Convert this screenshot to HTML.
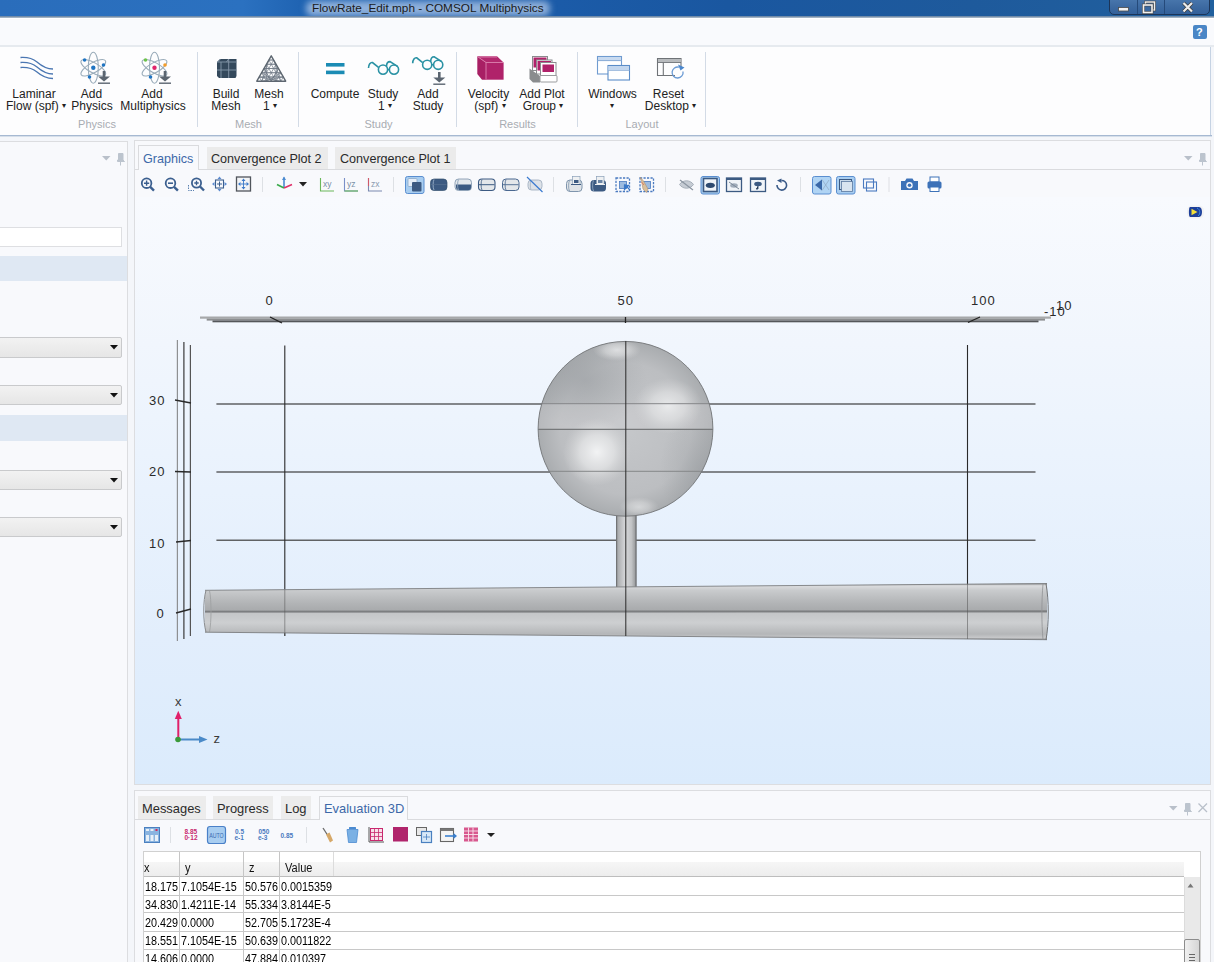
<!DOCTYPE html>
<html><head><meta charset="utf-8">
<style>
*{box-sizing:border-box}
html,body{margin:0;padding:0}
body{width:1214px;height:962px;position:relative;overflow:hidden;background:#f4f6fa;font-family:"Liberation Sans",sans-serif;color:#1e1e1e}
.a{position:absolute}
.t{position:absolute;white-space:nowrap;line-height:1}
.rb{font-size:12px;color:#222;text-align:center;width:100px}
.gl{font-size:11px;color:#a8acb2;text-align:center;width:80px}
svg{position:absolute;overflow:visible}
</style></head><body>

<!-- TITLE BAR -->
<div class="a" style="left:0;top:0;width:1214px;height:17px;background:linear-gradient(90deg,#2a6dbb 0%,#2b71c0 20%,#1f63b2 25%,#1b5ba8 46%,#1a57a0 60%,#1e5a9c 80%,#21609e 100%)"></div>
<div class="a" style="left:306px;top:1px;width:244px;height:15px;background:rgba(190,210,238,0.7);border-radius:6px;filter:blur(3px)"></div>
<div class="t" style="left:312px;top:3px;font-size:11.8px;color:#1a1a1a">FlowRate_Edit.mph - COMSOL Multiphysics</div>
<div class="a" style="left:0;top:15.5px;width:1214px;height:2px;background:linear-gradient(#5c7a9c,#b8c4d0)"></div>
<!-- window buttons -->
<div class="a" style="left:1109px;top:-3px;width:101px;height:18px;border:1px solid #1c3558;border-radius:0 0 5px 5px;background:linear-gradient(#4a78ae,#3c69a0 60%,#33609a)"></div>
<div class="a" style="left:1137px;top:0;width:1px;height:14px;background:#254a7a"></div>
<div class="a" style="left:1164px;top:0;width:1px;height:14px;background:#254a7a"></div>
<svg style="left:0;top:0" width="1214" height="20">
 <rect x="1118.5" y="7.5" width="10" height="3.5" fill="#f2f2f2" stroke="#4a4a4a" stroke-width="0.8"/>
 <rect x="1145.5" y="2" width="9" height="8" fill="none" stroke="#4a4a4a" stroke-width="2.6"/>
 <rect x="1145.5" y="2" width="9" height="8" fill="none" stroke="#eeeeee" stroke-width="1.4"/>
 <rect x="1143.5" y="5" width="8.5" height="7.5" fill="#3a68a0" stroke="#4a4a4a" stroke-width="2.8"/>
 <rect x="1143.5" y="5" width="8.5" height="7.5" fill="none" stroke="#f0f0f0" stroke-width="1.6"/>
 <rect x="1146" y="7.5" width="3.5" height="2.5" fill="#3a68a0"/>
 <path d="M1183.5 3 L1192 11.5 M1192 3 L1183.5 11.5" stroke="#3a3a3a" stroke-width="3.6"/>
 <path d="M1183.5 3 L1192 11.5 M1192 3 L1183.5 11.5" stroke="#ececec" stroke-width="2.2"/>
</svg>

<!-- QAT band -->
<div class="a" style="left:0;top:17.5px;width:1214px;height:29px;background:#f9fafd;border-top:1.5px solid #fff;border-bottom:2px solid #e6eaef"></div>
<div class="a" style="left:1193px;top:25px;width:14px;height:14px;background:#4a86c6;border-radius:2px"></div>
<div class="t" style="left:1196px;top:27px;font-size:11px;font-weight:bold;color:#fff">?</div>

<!-- RIBBON -->
<div class="a" style="left:0;top:46.5px;width:1211px;height:88.5px;background:#fdfdfe;border-right:1.5px solid #c6d3e3"></div>
<div class="a" style="left:0;top:135px;width:1212px;height:1px;background:#a6b9d2"></div><div class="a" style="left:0;top:136px;width:1212px;height:1px;background:#d6dfea"></div>


<!-- ribbon separators -->
<div class="a" style="left:197px;top:52px;width:1px;height:75px;background:#d3dbe6"></div>
<div class="a" style="left:298px;top:52px;width:1px;height:75px;background:#d3dbe6"></div>
<div class="a" style="left:456px;top:52px;width:1px;height:75px;background:#d3dbe6"></div>
<div class="a" style="left:577px;top:52px;width:1px;height:75px;background:#d3dbe6"></div>
<div class="a" style="left:705px;top:52px;width:1px;height:75px;background:#d3dbe6"></div>

<!-- ribbon labels line1 / line2 -->
<div class="t rb" style="left:-16px;top:87.5px">Laminar</div>
<div class="t rb" style="left:-14px;top:99.7px">Flow (spf) <span style="font-size:8px;position:relative;top:-2px">&#9662;</span></div>
<div class="t rb" style="left:41.5px;top:87.5px">Add</div>
<div class="t rb" style="left:42px;top:99.7px">Physics</div>
<div class="t rb" style="left:102px;top:87.5px">Add</div>
<div class="t rb" style="left:103px;top:99.7px">Multiphysics</div>
<div class="t rb" style="left:176px;top:87.5px">Build</div>
<div class="t rb" style="left:176px;top:99.7px">Mesh</div>
<div class="t rb" style="left:219px;top:87.5px">Mesh</div>
<div class="t rb" style="left:220px;top:99.7px">1 <span style="font-size:8px;position:relative;top:-2px">&#9662;</span></div>
<div class="t rb" style="left:285px;top:87.5px">Compute</div>
<div class="t rb" style="left:333px;top:87.5px">Study</div>
<div class="t rb" style="left:335px;top:99.7px">1 <span style="font-size:8px;position:relative;top:-2px">&#9662;</span></div>
<div class="t rb" style="left:378px;top:87.5px">Add</div>
<div class="t rb" style="left:378px;top:99.7px">Study</div>
<div class="t rb" style="left:438.5px;top:87.5px">Velocity</div>
<div class="t rb" style="left:440px;top:99.7px">(spf) <span style="font-size:8px;position:relative;top:-2px">&#9662;</span></div>
<div class="t rb" style="left:492px;top:87.5px">Add Plot</div>
<div class="t rb" style="left:493px;top:99.7px">Group <span style="font-size:8px;position:relative;top:-2px">&#9662;</span></div>
<div class="t rb" style="left:562.5px;top:87.5px">Windows</div>
<div class="t rb" style="left:562px;top:99.7px"><span style="font-size:8px;position:relative;top:-2px">&#9662;</span></div>
<div class="t rb" style="left:618.5px;top:87.5px">Reset</div>
<div class="t rb" style="left:620.5px;top:99.7px">Desktop <span style="font-size:8px;position:relative;top:-2px">&#9662;</span></div>

<div class="t gl" style="left:57px;top:119px">Physics</div>
<div class="t gl" style="left:208.5px;top:119px">Mesh</div>
<div class="t gl" style="left:338.5px;top:119px">Study</div>
<div class="t gl" style="left:477.5px;top:119px">Results</div>
<div class="t gl" style="left:602px;top:119px">Layout</div>

<!-- ribbon icons -->
<svg style="left:0;top:0" width="1" height="1">
<defs>
<g id="atom">
 <ellipse cx="0" cy="0" rx="15.5" ry="5" fill="none" stroke="#9aacba" stroke-width="1.1" transform="rotate(90)"/>
 <ellipse cx="0" cy="0" rx="14" ry="5" fill="none" stroke="#9aacba" stroke-width="1.1" transform="rotate(30)"/>
 <ellipse cx="0" cy="0" rx="14" ry="5" fill="none" stroke="#9aacba" stroke-width="1.1" transform="rotate(-30)"/>
</g>
<g id="dl">
 <rect x="-1.3" y="-6" width="2.6" height="6" fill="#5b6570"/>
 <path d="M-6 -0.5 L6 -0.5 L0 4.5Z" fill="#5b6570"/>
 <rect x="-6" y="5.5" width="12" height="1.4" fill="#5b6570"/>
</g>
<g id="glasses">
 <path d="M-14.5 -1.5 C-14.5 -5 -12.5 -7.5 -10.5 -7 L-4.5 -2.2" fill="none" stroke="#2a92a4" stroke-width="1.6"/>
 <circle cx="0" cy="0" r="4.6" fill="none" stroke="#2a92a4" stroke-width="1.6"/>
 <circle cx="11" cy="0" r="4.6" fill="none" stroke="#2a92a4" stroke-width="1.6"/>
 <path d="M4.5 0 L6.5 0 M3.5 -3 C3.5 -6.5 5 -8 7 -8 L14.5 -3.2" fill="none" stroke="#2a92a4" stroke-width="1.6"/>
</g>
</defs>
</svg>
<!-- laminar -->
<svg style="left:20px;top:56px" width="34" height="24">
 <g fill="none" stroke="#4a76b2" stroke-width="1.3">
 <path d="M0.5 1.5 C8 1 14 3.5 17 6 C21 9.5 27 13 33 13"/>
 <path d="M0.5 6.5 C8 6 14 8.5 17 11 C21 14.5 27 18 33 18"/>
 <path d="M0.5 11.5 C8 11 14 13.5 17 16 C21 19.5 27 22.5 33 22.5"/>
 </g>
</svg>
<!-- add physics -->
<svg style="left:0;top:0" width="1" height="1">
 <use href="#atom" x="93.3" y="67.7"/>
 <circle cx="93.3" cy="67.7" r="3.4" fill="#fdfdfe"/><circle cx="93.3" cy="67.7" r="2.2" fill="#1f74c2"/>
 <circle cx="84.6" cy="60" r="1.8" fill="#1f74c2"/>
 <circle cx="103.5" cy="65" r="1.8" fill="#1f74c2"/>
 <circle cx="89.5" cy="77" r="1.8" fill="#1f74c2"/>
 <use href="#dl" x="104" y="77"/>
</svg>
<!-- add multiphysics -->
<svg style="left:0;top:0" width="1" height="1">
 <use href="#atom" x="154.5" y="67.7"/>
 <circle cx="154.5" cy="67.7" r="3.4" fill="#fdfdfe"/><circle cx="154.5" cy="67.7" r="2.2" fill="#e0246c"/>
 <circle cx="145.5" cy="60" r="1.8" fill="#6cc24a"/>
 <circle cx="165" cy="65" r="1.8" fill="#f39c2a"/>
 <circle cx="150.5" cy="77" r="1.8" fill="#1f74c2"/>
 <use href="#dl" x="165" y="77"/>
</svg>
<!-- build mesh cube -->
<svg style="left:216px;top:58px" width="22" height="22">
 <path d="M1 4 L4 1 L20.5 1 L20.5 18 L19.5 20 L3 20 L1 18Z" fill="#34495c"/>
 <path d="M1 4 L20.5 4 M5 4 L5 20 M12.7 1 L12.7 20 M1 12 L20.5 12 M4.5 1 L1.5 4 M12.7 1 L10.5 4" stroke="#8799aa" stroke-width="0.9" fill="none"/>
</svg>
<!-- mesh triangle -->
<svg style="left:256px;top:55px" width="31" height="27">
 <path d="M12.84 5.03 L17.66 5.03 M5.62 26.20 L17.66 5.03 M24.88 26.20 L12.84 5.03 M10.43 9.27 L20.07 9.27 M10.43 26.20 L20.07 9.27 M20.07 26.20 L10.43 9.27 M8.03 13.50 L22.48 13.50 M15.25 26.20 L22.48 13.50 M15.25 26.20 L8.03 13.50 M5.62 17.73 L24.88 17.73 M20.07 26.20 L24.88 17.73 M10.43 26.20 L5.62 17.73 M3.21 21.97 L27.29 21.97 M24.88 26.20 L27.29 21.97 M5.62 26.20 L3.21 21.97" stroke="#6f7985" stroke-width="0.7" fill="none"/>
 <path d="M12.84 5.03 L17.66 5.03 M5.62 26.20 L27.29 21.97 M24.88 26.20 L3.21 21.97 M10.43 9.27 L20.07 9.27 M10.43 26.20 L24.88 17.73 M20.07 26.20 L5.62 17.73 M8.03 13.50 L22.48 13.50 M15.25 26.20 L22.48 13.50 M15.25 26.20 L8.03 13.50 M5.62 17.73 L24.88 17.73 M20.07 26.20 L20.07 9.27 M10.43 26.20 L10.43 9.27 M3.21 21.97 L27.29 21.97 M24.88 26.20 L17.66 5.03 M5.62 26.20 L12.84 5.03" stroke="#6f7985" stroke-width="0.7" fill="none"/>
 <path d="M15.25 0.8 L29.7 26.2 L0.8 26.2Z" fill="none" stroke="#5d6670" stroke-width="1.4" stroke-linejoin="round"/>
</svg>
<!-- compute = -->
<svg style="left:326px;top:63px" width="19" height="12">
 <rect x="0" y="0" width="18.5" height="3.6" fill="#1b8bb4"/>
 <rect x="0" y="7.6" width="18.5" height="3.6" fill="#1b8bb4"/>
</svg>
<!-- study glasses -->
<svg style="left:0;top:0" width="1" height="1"><use href="#glasses" x="383" y="69.6"/></svg>
<svg style="left:0;top:0" width="1" height="1"><use href="#glasses" x="427.2" y="64.8"/></svg>
<svg style="left:0;top:0" width="1" height="1"><use href="#dl" x="439.3" y="78"/></svg>
<!-- velocity cube -->
<svg style="left:0;top:0" width="1" height="1">
 <path d="M477.3 56.3 L497 56.3 L503.6 62.5 L486 62.5Z" fill="#b3286e"/>
 <path d="M477.3 56.3 L486 62.5 L486 79.7 L482 79.7 L477.3 74Z" fill="#a81f64"/>
 <rect x="486" y="62.5" width="17.6" height="17.2" fill="#b0226a"/>
 <path d="M477.8 56.8 L486 62.5 L503.3 62.5 M486 62.5 L486 79.5 M479.5 57 L497 57" stroke="#d878a8" stroke-width="1" fill="none"/>
</svg>
<!-- add plot group -->
<svg style="left:0;top:0" width="1" height="1">
 <path d="M529.5 68.5 L540 76 L540 82.5 L533 82.5 L529.5 79Z" fill="#8a8c8e"/>
 <rect x="532.5" y="56.5" width="15" height="14" fill="#fff" stroke="#8a8c8e" stroke-width="1"/>
 <rect x="533.5" y="57.5" width="13" height="10" fill="#b0226a"/>
 <rect x="536.5" y="60" width="15.5" height="14" fill="#fff" stroke="#8a8c8e" stroke-width="1"/>
 <rect x="537.5" y="61" width="13.5" height="9.5" fill="#b0226a"/>
 <rect x="540.5" y="62.5" width="15.5" height="14.5" fill="#fff" stroke="#8a8c8e" stroke-width="1"/>
 <rect x="542.5" y="64.5" width="11.5" height="7.5" fill="#b0226a"/>
 <rect x="540" y="75.5" width="17" height="6.5" rx="1" fill="#fff" stroke="#9a9c9e" stroke-width="1"/>
</svg>
<!-- windows -->
<svg style="left:0;top:0" width="1" height="1">
 <rect x="597.5" y="56.5" width="24" height="17.5" fill="#fff" stroke="#6f9bd0" stroke-width="1.1"/>
 <path d="M597.5 60.5 L621.5 60.5" stroke="#8fb0d8" stroke-width="1.2"/>
 <rect x="598" y="57" width="23" height="3" fill="#c8daf0"/>
 <rect x="608" y="65.5" width="21.5" height="14.5" fill="#fff" stroke="#5a8cc8" stroke-width="1.1"/>
 <rect x="608.5" y="66" width="20.5" height="4" fill="#c2d6ee"/>
 <path d="M608 70.5 L629.5 70.5" stroke="#8fb0d8" stroke-width="0.8"/>
</svg>
<!-- reset desktop -->
<svg style="left:0;top:0" width="1" height="1">
 <path d="M675 75.5 L657.5 75.5 L657.5 58.5 L681 58.5 L681 67" fill="none" stroke="#6f7377" stroke-width="1.1"/>
 <rect x="658" y="59" width="22.5" height="3.5" fill="#b8bbbe"/>
 <path d="M657.5 62.5 L681 62.5" stroke="#6f7377" stroke-width="0.9"/>
 <path d="M663.3 62.5 L663.3 75.5" stroke="#6f7377" stroke-width="1.1"/>
 <path d="M683 71.5 A5.5 5.5 0 1 1 679 67.2" fill="none" stroke="#6a9ad4" stroke-width="1.3"/>
 <path d="M678 64.5 L684.5 67.5 L680.5 70.5Z" fill="#4a86cc"/>
</svg>

<!-- LEFT PANEL -->
<div class="a" style="left:-2px;top:141px;width:130px;height:830px;background:#f8f9fc;border:1px solid #dcdde0;border-left:none"></div>
<svg style="left:102px;top:156px" width="9" height="5"><path d="M0 0 L8.5 0 L4.25 4.5Z" fill="#b9c0ca"/></svg>
<svg style="left:117px;top:153px" width="8" height="13"><path d="M1.5 0.5 L6 0.5 L6 7 L7.5 8.5 L0.5 8.5 L0.5 7 L1.5 7Z M3.5 8.5 L3.5 12.5" fill="#bcc4ce" stroke="#bcc4ce" stroke-width="1"/></svg>
<div class="a" style="left:-2px;top:227px;width:124px;height:20px;background:#fff;border:1px solid #dedfe2"></div>
<div class="a" style="left:0;top:256px;width:127px;height:25px;background:#dfe8f3"></div>
<div class="a" style="left:-4px;top:337px;width:126px;height:21px;border:1px solid #c9cacc;border-radius:2px;background:linear-gradient(#f2f2f2,#e6e6e6)"></div>
<div class="a" style="left:-4px;top:385px;width:126px;height:20px;border:1px solid #c9cacc;border-radius:2px;background:linear-gradient(#f2f2f2,#e6e6e6)"></div>
<div class="a" style="left:0;top:415px;width:127px;height:26px;background:#dfe8f3"></div>
<div class="a" style="left:-4px;top:470px;width:126px;height:20px;border:1px solid #c9cacc;border-radius:2px;background:linear-gradient(#f2f2f2,#e6e6e6)"></div>
<div class="a" style="left:-4px;top:517px;width:126px;height:20px;border:1px solid #c9cacc;border-radius:2px;background:linear-gradient(#f2f2f2,#e6e6e6)"></div>
<svg style="left:110px;top:345px" width="9" height="5"><path d="M0 0 L8 0 L4 4.5Z" fill="#111"/></svg>
<svg style="left:110px;top:393px" width="9" height="5"><path d="M0 0 L8 0 L4 4.5Z" fill="#111"/></svg>
<svg style="left:110px;top:478px" width="9" height="5"><path d="M0 0 L8 0 L4 4.5Z" fill="#111"/></svg>
<svg style="left:110px;top:525px" width="9" height="5"><path d="M0 0 L8 0 L4 4.5Z" fill="#111"/></svg>

<!-- GRAPHICS PANEL -->
<div class="a" style="left:134px;top:140px;width:1077px;height:645px;background:#f8f9fc;border:1px solid #dcdde0"></div>
<div class="a" style="left:135px;top:197px;width:1075px;height:587px;background:linear-gradient(#f8fafe 0%,#f1f6fd 25%,#e9f2fd 50%,#e2eefc 75%,#dbebfc 100%)"></div>

<!-- PLOT -->
<svg style="left:0;top:0" width="1214" height="962" viewBox="0 0 1214 962">
<defs>
 <linearGradient id="pipeg" x1="0" y1="0" x2="0" y2="1">
  <stop offset="0" stop-color="#8a8c8e"/>
  <stop offset="0.04" stop-color="#dcdddf"/>
  <stop offset="0.12" stop-color="#c9cbcd"/>
  <stop offset="0.35" stop-color="#b2b4b6"/>
  <stop offset="0.47" stop-color="#a9abad"/>
  <stop offset="0.5" stop-color="#7c7e80"/>
  <stop offset="0.53" stop-color="#c4c6c8"/>
  <stop offset="0.7" stop-color="#cdcfd1"/>
  <stop offset="0.9" stop-color="#b4b6b8"/>
  <stop offset="0.97" stop-color="#c8c9cb"/>
  <stop offset="1" stop-color="#7a7c7e"/>
 </linearGradient>
 <linearGradient id="stemg" x1="0" y1="0" x2="1" y2="0">
  <stop offset="0" stop-color="#7d7f81"/>
  <stop offset="0.12" stop-color="#aeb0b2"/>
  <stop offset="0.45" stop-color="#d6d7d9"/>
  <stop offset="0.75" stop-color="#c2c4c6"/>
  <stop offset="0.9" stop-color="#a3a5a7"/>
  <stop offset="1" stop-color="#76787a"/>
 </linearGradient>
 <radialGradient id="sph" cx="0.5" cy="0.5" r="0.5">
  <stop offset="0" stop-color="#c5c7ca"/>
  <stop offset="0.75" stop-color="#bcbec1"/>
  <stop offset="1" stop-color="#a9acaf"/>
 </radialGradient>
 <radialGradient id="hl" cx="0.5" cy="0.5" r="0.5">
  <stop offset="0" stop-color="#f2f3f4" stop-opacity="1"/>
  <stop offset="0.5" stop-color="#e8e9ea" stop-opacity="0.7"/>
  <stop offset="1" stop-color="#d8d9da" stop-opacity="0"/>
 </radialGradient>
 <radialGradient id="dk" cx="0.5" cy="0.5" r="0.5">
  <stop offset="0" stop-color="#969a9e" stop-opacity="0.7"/>
  <stop offset="1" stop-color="#969a9e" stop-opacity="0"/>
 </radialGradient>
 <clipPath id="sc"><circle cx="625.5" cy="428.8" r="87.4"/></clipPath>
</defs>
<!-- top axis band -->
<rect x="200" y="316.5" width="851" height="2.2" fill="#a6a8aa"/>
<rect x="206.7" y="318.6" width="838.3" height="2" fill="#8c8e90"/>
<rect x="212.5" y="320.5" width="826" height="1.8" fill="#55575a"/>
<path d="M270 317 L282 323" stroke="#222" stroke-width="1.3"/>
<path d="M625.5 317 L625.5 323" stroke="#222" stroke-width="1.3"/>
<path d="M968 322.5 L980 317" stroke="#222" stroke-width="1.3"/>
<!-- left axis -->
<path d="M177.4 340 L177.4 641" stroke="#8e9092" stroke-width="1.2"/>
<path d="M183.9 342 L183.9 639" stroke="#3a3a3a" stroke-width="1.2"/>
<path d="M190.4 345 L190.4 636" stroke="#555" stroke-width="1.2"/>
<path d="M175 400 L191 403 M175 471.5 L191 472 M176 542 L191 540.5 M176 613 L191 609" stroke="#2a2a2a" stroke-width="1.3"/>
<!-- grid -->
<g stroke="#606264" stroke-width="1.4">
<path d="M216.4 404 L1035.5 404 M216.4 472 L1035.5 472 M216.4 540.3 L1035.5 540.3"/>
</g>
<g stroke="#2a2a2a" stroke-width="1.1">
<path d="M284.8 345.4 L284.8 636 M967.5 345 L967.5 636"/>
</g>
<!-- stem -->
<rect x="616" y="510" width="20.5" height="79" fill="url(#stemg)"/>
<path d="M616.5 510 L616.5 588 M636 510 L636 588" stroke="#6d6f71" stroke-width="0.8"/>
<!-- pipe -->
<path d="M205 590.3 L1047 583.5 L1047 639.7 L205 632.2 Z" fill="url(#pipeg)"/>
<path d="M205 590.3 L1047 583.5 M205 632.2 L1047 639.7" stroke="#7d7f81" stroke-width="0.9"/>
<path d="M205 611.6 L1047 611.3" stroke="#7c7e80" stroke-width="1.4"/>
<path d="M206 590.5 C203 600 203 622 206 632" fill="none" stroke="#8a8c8e" stroke-width="1"/>
<path d="M209.5 590.5 C211.5 600 211.5 622 209.5 632" fill="none" stroke="#9c9ea0" stroke-width="0.8"/>
<path d="M1043 584 C1041.5 600 1041.5 624 1043 639.5" fill="none" stroke="#909294" stroke-width="0.8"/>
<path d="M1046 583.7 C1049 600 1049 624 1046 639.7" fill="none" stroke="#727476" stroke-width="1"/>
<!-- sphere -->
<circle cx="625.5" cy="428.8" r="87.4" fill="url(#sph)"/>
<g clip-path="url(#sc)">
 <ellipse cx="585" cy="380" rx="62" ry="48" fill="url(#dk)" opacity="0.8"/>
 <ellipse cx="700" cy="470" rx="40" ry="60" fill="url(#dk)" opacity="0.55"/>
 <rect x="530" y="404" width="190" height="25" fill="#d0d1d3" opacity="0.35"/>
 <ellipse cx="668" cy="406" rx="34" ry="28" fill="url(#hl)" opacity="0.8"/>
 <ellipse cx="597" cy="452" rx="34" ry="34" fill="url(#hl)"/>
 <ellipse cx="617" cy="350" rx="24" ry="11" fill="url(#hl)" opacity="0.7"/>
 <ellipse cx="639" cy="507" rx="20" ry="10" fill="url(#hl)" opacity="0.55"/>
 <path d="M530 403.7 L720 403.7 M530 471.3 L720 471.3" stroke="#858789" stroke-width="1"/>
</g>
<circle cx="625.5" cy="428.8" r="87.4" fill="none" stroke="#727476" stroke-width="0.9"/>
<path d="M538 429.4 L713 429.4" stroke="#76787a" stroke-width="1.3"/>
<path d="M625.8 341 L625.8 636" stroke="#2a2a2a" stroke-width="1"/>
<path d="M284.8 590 L284.8 636 M967.5 584 L967.5 639" stroke="#555" stroke-width="0.9" opacity="0.6"/>
<!-- axis labels -->
<g font-family="Liberation Sans" font-size="13" fill="#2a2a2a" letter-spacing="1">
<text x="265.5" y="305">0</text>
<text x="617.5" y="305">50</text>
<text x="971" y="305">100</text>
<text x="1044" y="315.5">-10</text>
<text x="1056" y="309.8">10</text>
<text x="149" y="405">30</text>
<text x="149" y="475.5">20</text>
<text x="149" y="547.7">10</text>
<text x="156.5" y="618">0</text>
</g>
<!-- triad -->
<path d="M178.3 739 L178.3 718" stroke="#e0206a" stroke-width="2"/>
<path d="M174.8 719 L181.8 719 L178.3 710.8Z" fill="#e0206a"/>
<path d="M179 739.5 L199.5 739.5" stroke="#4a8ac8" stroke-width="2"/>
<path d="M199 736 L199 743 L207.5 739.5Z" fill="#4a8ac8"/>
<circle cx="178" cy="739.5" r="2.8" fill="#3a9a3a"/>
<g font-family="Liberation Sans" font-size="13" fill="#3a3a3a">
<text x="175" y="705.5">x</text>
<text x="213.5" y="743.3">z</text>
</g>
<!-- comsol logo -->
<rect x="1187" y="205.5" width="17" height="13" rx="5" fill="#f0f0f0" opacity="0.8"/>
<path d="M1190 207 L1199 207 C1203 207 1203 217 1199 217 L1190 217 C1188.5 217 1188.5 207 1190 207Z" fill="#1d3f9a"/>
<path d="M1191.5 208.8 L1197.5 212 L1191.5 215.2Z" fill="#f2df3a"/>
<path d="M1197 208 C1200 209 1201 214 1198 216" stroke="#3a8ae0" stroke-width="1" fill="none"/>
</svg>

<!-- tabs -->
<div class="a" style="left:135px;top:169px;width:1075px;height:1px;background:#dadbde"></div>
<div class="a" style="left:138px;top:145px;width:61px;height:25px;background:#f8f9fc;border:1px solid #dadbde;border-bottom:none"></div>
<div class="t" style="left:143px;top:153px;font-size:12.6px;color:#3d68a8">Graphics</div>
<div class="a" style="left:207px;top:147px;width:121px;height:22px;background:#ebebeb"></div>
<div class="t" style="left:211px;top:153px;font-size:12.6px;color:#2a2a2a">Convergence Plot 2</div>
<div class="a" style="left:335px;top:147px;width:121px;height:22px;background:#ebebeb"></div>
<div class="t" style="left:340px;top:153px;font-size:12.6px;color:#2a2a2a">Convergence Plot 1</div>
<svg style="left:1184px;top:156px" width="9" height="5"><path d="M0 0 L8.5 0 L4.25 4.5Z" fill="#b9c0ca"/></svg>
<svg style="left:1199px;top:153px" width="8" height="13"><path d="M1.5 0.5 L6 0.5 L6 7 L7.5 8.5 L0.5 8.5 L0.5 7 L1.5 7Z M3.5 8.5 L3.5 12.5" fill="#bcc4ce" stroke="#bcc4ce" stroke-width="1"/></svg>

<!-- MP -->
<div class="a" style="left:134px;top:790px;width:1077px;height:180px;background:#f8f9fc;border:1px solid #dcdde0"></div>
<div class="a" style="left:135px;top:819px;width:1075px;height:1px;background:#dadbde"></div>
<div class="a" style="left:138px;top:796px;width:68px;height:23px;background:#ececec"></div>
<div class="t" style="left:142px;top:802.5px;font-size:12.9px;color:#2a2a2a">Messages</div>
<div class="a" style="left:213px;top:796px;width:60px;height:23px;background:#ececec"></div>
<div class="t" style="left:217px;top:802.5px;font-size:12.9px;color:#2a2a2a">Progress</div>
<div class="a" style="left:281px;top:796px;width:30px;height:23px;background:#ececec"></div>
<div class="t" style="left:285px;top:802.5px;font-size:12.9px;color:#2a2a2a">Log</div>
<div class="a" style="left:319px;top:796px;width:89px;height:24px;background:#f8f9fc;border:1px solid #dadbde;border-bottom:none"></div>
<div class="t" style="left:324px;top:802.5px;font-size:12.9px;color:#3d68a8">Evaluation 3D</div>
<svg style="left:1169px;top:806px" width="9" height="5"><path d="M0 0 L8.5 0 L4.25 4.5Z" fill="#b9c0ca"/></svg>
<svg style="left:1184px;top:803px" width="8" height="13"><path d="M1.5 0.5 L6 0.5 L6 7 L7.5 8.5 L0.5 8.5 L0.5 7 L1.5 7Z M3.5 8.5 L3.5 12.5" fill="#bcc4ce" stroke="#bcc4ce" stroke-width="1"/></svg>
<svg style="left:1198px;top:803px" width="10" height="10"><path d="M0.5 0.5 L9 9 M9 0.5 L0.5 9" stroke="#b9c0ca" stroke-width="1.3"/></svg>


<!-- GRAPHICS TOOLBAR -->
<svg style="left:0;top:0" width="1214" height="962" viewBox="0 0 1214 962">
<g fill="none" stroke="#3b5f8f" stroke-width="1.8">
 <circle cx="146.6" cy="183.2" r="4.8"/><path d="M150.2 186.8 L154 190.6" stroke-width="2.4"/>
 <path d="M144 183.2 L149.2 183.2 M146.6 180.6 L146.6 185.8" stroke-width="1.4"/>
 <circle cx="170.5" cy="183.2" r="4.8"/><path d="M174.1 186.8 L177.9 190.6" stroke-width="2.4"/>
 <path d="M168 183.2 L173 183.2" stroke-width="1.6"/>
 <circle cx="196.5" cy="183" r="4.6"/><path d="M200 186.5 L204 190.5" stroke-width="2.4"/>
 <path d="M194.3 183 L198.7 183 M196.5 180.8 L196.5 185.2" stroke-width="1.3"/>
</g>
<path d="M188.5 185 L188.5 190.5 L194 190.5" fill="none" stroke="#5a80b0" stroke-width="1" stroke-dasharray="1.5 1"/>
<!-- pan -->
<g stroke="#3b5f8f" fill="none">
 <rect x="215.5" y="180" width="8" height="8" stroke-width="1.1"/>
 <path d="M219.5 181.5 L219.5 186.5 M217 184 L222 184" stroke-width="1"/>
</g>
<g fill="#5a8ad0">
 <path d="M219.5 176.5 L217.5 179 L221.5 179Z M219.5 191.5 L217.5 189 L221.5 189Z M212 184 L214.5 182 L214.5 186Z M227 184 L224.5 182 L224.5 186Z"/>
</g>
<!-- zoom extents -->
<rect x="236.5" y="177" width="14" height="14" fill="#f2f4f6" stroke="#50555c" stroke-width="1.3"/>
<g fill="#3a78c8"><path d="M243.5 178.5 L241.5 181 L245.5 181Z M243.5 189.5 L241.5 187 L245.5 187Z M238 184 L240.5 182 L240.5 186Z M249 184 L246.5 182 L246.5 186Z"/></g>
<path d="M243.5 181 L243.5 187 M240.5 184 L246.5 184" stroke="#3a78c8" stroke-width="0.9"/>
<!-- sep -->
<rect x="262" y="177" width="1" height="15" fill="#dde0e4"/>
<!-- axis icon -->
<path d="M284 177.5 L284 188" stroke="#4a8ad0" stroke-width="1.6"/>
<path d="M282 180 L284 176.5 L286 180Z" fill="#4a8ad0"/>
<path d="M284 188 L277 184.5" stroke="#3aaa4a" stroke-width="1.6"/>
<path d="M284 188 L292 184.5" stroke="#e0306a" stroke-width="1.6"/>
<path d="M299 182 L307 182 L303 186.5Z" fill="#222"/>
<!-- xy yz zx -->
<g font-family="Liberation Sans" font-size="8.5">
 <path d="M320.5 178 L320.5 191 L334 191" fill="none" stroke="#6ab85a" stroke-width="1.1"/>
 <text x="323" y="187" fill="#7a90a8">xy</text>
 <path d="M344.5 178 L344.5 191 L358 191" fill="none" stroke="#7a90c8" stroke-width="1.1"/>
 <path d="M344.5 191 L358 191" fill="none" stroke="#6ab85a" stroke-width="1.1"/>
 <text x="347" y="187" fill="#7a90a8">yz</text>
 <path d="M368.5 178 L368.5 191 L382 191" fill="none" stroke="#7a8ab0" stroke-width="1.1"/>
 <path d="M368.5 178 L368.5 186" fill="none" stroke="#d05a6a" stroke-width="1.1"/>
 <text x="371" y="187" fill="#8a9ab0">zx</text>
</g>
<rect x="393" y="177" width="1" height="15" fill="#dde0e4"/>
<!-- selected view box -->
<rect x="405.5" y="176.5" width="18.5" height="17" rx="2" fill="#a8cdf0" stroke="#5a8ed0" stroke-width="1"/>
<rect x="408" y="178.5" width="9" height="8" rx="1" fill="#e6eef8" stroke="#8aa8c8" stroke-width="0.8"/>
<rect x="412" y="182" width="9.5" height="9.5" rx="1" fill="#3c5a82"/>
<!-- view icons -->
<rect x="430.5" y="179" width="16.5" height="11.5" rx="3.5" fill="#3c5a82" stroke="#34506f" stroke-width="0.7"/>
<path d="M434 179.5 C432.8 181.5 432.8 188 434 190" fill="none" stroke="#9ab0c8" stroke-width="0.9"/>
<path d="M431 184.5 L446.5 184.5" stroke="#5a7494" stroke-width="0.6"/>
<rect x="455" y="179" width="16.5" height="11.5" rx="3.5" fill="#e4e8ec" stroke="#7890aa" stroke-width="0.8"/>
<path d="M456 184.5 L471 184.5 L471 187.5 C471 189.5 470 190 468 190 L459 190 C457 190 456 189 456 187Z" fill="#3c5a82"/>
<path d="M458.5 179.5 C457.3 181.5 457.3 188 458.5 190" fill="none" stroke="#8aa0b8" stroke-width="0.9"/>
<rect x="478.5" y="179" width="16.5" height="11.5" rx="3.5" fill="#e4e7ea" stroke="#3c5a82" stroke-width="1.1"/>
<path d="M479 184.7 L494.5 184.7" stroke="#3c5a82" stroke-width="1"/>
<path d="M482 179.5 C480.8 181.5 480.8 188 482 190" fill="none" stroke="#3c5a82" stroke-width="0.8"/>
<rect x="502.5" y="179" width="16.5" height="11.5" rx="3.5" fill="#e4e7ea" stroke="#4a6890" stroke-width="1"/>
<path d="M503 184.7 L518.5 184.7" stroke="#4a6890" stroke-width="0.9"/>
<path d="M506 179.5 C504.8 181.5 504.8 188 506 190" fill="none" stroke="#4a6890" stroke-width="0.8"/>
<rect x="528" y="180" width="14" height="10" rx="3.5" fill="#dde2e8" stroke="#9aaabb" stroke-width="0.8"/>
<path d="M531 180.5 C530 182.5 530 187.5 531 189.5" fill="none" stroke="#9aaabb" stroke-width="0.7"/>
<path d="M527 177 L542.5 192" stroke="#3a7ad0" stroke-width="1.2"/>
<rect x="553" y="177" width="1" height="15" fill="#dde0e4"/>
<!-- printer-like views -->
<rect x="566.5" y="180" width="15.5" height="11.5" rx="3.5" fill="#dfe3e7" stroke="#7f95ad" stroke-width="1"/>
<path d="M569.5 180.5 C568.3 182.5 568.3 189 569.5 191" fill="none" stroke="#7f95ad" stroke-width="0.8"/>
<rect x="572.5" y="176.5" width="7.5" height="8" fill="#eef0f2" stroke="#8aa0b8" stroke-width="0.7"/>
<rect x="574" y="180" width="4.5" height="3" fill="#3c5a82"/>
<path d="M571 184.5 L581 184.5" stroke="#3c5a82" stroke-width="1"/>
<rect x="590.5" y="180" width="15.5" height="11.5" rx="3.5" fill="#3c5a82"/>
<path d="M593.5 180.5 C592.3 182.5 592.3 189 593.5 191" fill="none" stroke="#9ab0c8" stroke-width="0.8"/>
<rect x="596.5" y="176.5" width="7.5" height="8" fill="#eef0f2" stroke="#8aa0b8" stroke-width="0.7"/>
<rect x="598" y="180" width="4.5" height="3" fill="#6a84a4"/>
<path d="M595 184.5 L605 184.5" stroke="#eef0f2" stroke-width="1"/>
<rect x="616" y="178" width="13.5" height="13.5" fill="none" stroke="#4a7ac0" stroke-width="1.3" stroke-dasharray="2.2 1.3"/>
<rect x="619.5" y="181.5" width="7" height="7" fill="#9ebce0" stroke="#4a7ac0" stroke-width="0.8"/>
<path d="M624.5 184.5 L630 190 M624.5 184.5 L624.5 189.5 L629 185" fill="#3a78c8" stroke="#3a78c8" stroke-width="1.2"/>
<rect x="640" y="178" width="13.5" height="13.5" fill="none" stroke="#4a7ac0" stroke-width="1.3" stroke-dasharray="2.2 1.3"/>
<rect x="643.5" y="181.5" width="7" height="7" fill="#9ebce0" stroke="#4a7ac0" stroke-width="0.8"/>
<path d="M640 177 L643.5 181 L648 189 L646.5 192.5 L643 189 L641.5 181Z" fill="#d8c09c" stroke="#b09070" stroke-width="0.6"/>
<path d="M641.5 182 L644 185" stroke="#e08060" stroke-width="1"/>
<rect x="665" y="177" width="1" height="15" fill="#dde0e4"/>
<!-- eyes -->
<path d="M679.5 184.5 C683 179.5 690 179.5 693.5 184.5 C690 189.5 683 189.5 679.5 184.5Z" fill="#c6ccd4" stroke="#9aa4b0" stroke-width="0.8"/>
<path d="M680 180 L693 190" stroke="#8a94a0" stroke-width="1.2"/>
<rect x="701" y="176.5" width="18.5" height="17.5" rx="2" fill="#a8cdf0" stroke="#5a8ed0" stroke-width="1"/>
<rect x="703.5" y="178.5" width="13.5" height="13" fill="#f0f4f8" stroke="#3c5a82" stroke-width="1.6"/>
<ellipse cx="710.3" cy="185.3" rx="4.5" ry="2.6" fill="#2e4a70"/>
<rect x="726.5" y="178" width="15" height="13.5" fill="#f0f4f8" stroke="#3c5a82" stroke-width="1.3"/>
<rect x="726.5" y="178" width="15" height="2" fill="#3c5a82"/>
<ellipse cx="734" cy="185.5" rx="3.8" ry="2.2" fill="#a0acba"/>
<path d="M729 182 L739 189" stroke="#7a8898" stroke-width="1"/>
<rect x="750.5" y="178" width="15" height="13.5" fill="#f0f4f8" stroke="#3c5a82" stroke-width="1.3"/>
<rect x="750.5" y="178" width="15" height="2" fill="#3c5a82"/>
<ellipse cx="758" cy="184" rx="3.8" ry="2.2" fill="#3c5a82"/>
<path d="M758 186 L758 189 L756 189" stroke="#3c5a82" stroke-width="1"/>
<path d="M781.5 180.5 A4.8 4.8 0 1 1 777 185" fill="none" stroke="#3a5a88" stroke-width="1.6"/>
<path d="M777 180.5 L781.5 178.5 L781.5 183Z" fill="#3a5a88"/>
<rect x="800" y="177" width="1" height="15" fill="#dde0e4"/>
<!-- selected render mode boxes -->
<rect x="812.5" y="176.5" width="18.5" height="17.5" rx="2" fill="#b0d4f4" stroke="#5a8ed0" stroke-width="1"/>
<path d="M815 185 L822 179.5 L822 190.5Z" fill="#3a68a8"/>
<path d="M822 179.5 L829 190 M822 190.5 L829 180" stroke="#8aa0b8" stroke-width="0.6"/>
<rect x="836.5" y="176.5" width="18.5" height="17.5" rx="2" fill="#a8cdf0" stroke="#5a8ed0" stroke-width="1"/>
<rect x="839.5" y="179.5" width="12" height="10" fill="#c6d8ea" stroke="#3c5a82" stroke-width="1"/>
<rect x="841.5" y="181.5" width="11" height="10" fill="#d8e4f0" stroke="#5a78a0" stroke-width="0.8"/>
<rect x="863.5" y="179" width="10" height="9" fill="none" stroke="#4a7ac0" stroke-width="1.1"/>
<rect x="866.5" y="182" width="10" height="9" fill="none" stroke="#4a7ac0" stroke-width="1.1"/>
<rect x="888.5" y="177" width="1" height="15" fill="#dde0e4"/>
<!-- camera -->
<path d="M901 181 L905 181 L906.5 178.5 L912.5 178.5 L914 181 L918 181 L918 190 L901 190Z" fill="#3d72b8"/>
<circle cx="909.5" cy="185.3" r="3.2" fill="#f8f9fc"/>
<circle cx="909.5" cy="185.3" r="1.8" fill="#3d72b8"/>
<!-- printer -->
<rect x="930" y="177" width="9" height="5" fill="#fff" stroke="#3d72b8" stroke-width="1"/>
<rect x="927.5" y="181.5" width="14" height="7" rx="1.5" fill="#3d72b8"/>
<rect x="930" y="187" width="9" height="4.5" fill="#fff" stroke="#3d72b8" stroke-width="1"/>
</svg>

<!-- MESSAGES TOOLBAR -->
<svg style="left:0;top:0" width="1214" height="962" viewBox="0 0 1214 962">
<rect x="144.5" y="827.5" width="15" height="15" fill="#8ab4e0" stroke="#4a80c0" stroke-width="1"/>
<g fill="#e8f0f8"><rect x="146" y="829" width="3" height="2"/><rect x="150.5" y="829" width="3" height="2"/><rect x="146" y="835" width="3" height="6"/><rect x="150.5" y="835" width="3" height="6"/><rect x="155" y="835" width="3" height="6"/></g>
<rect x="155.5" y="829" width="2" height="2" fill="#d02a5a"/>
<rect x="170" y="827" width="1" height="16" fill="#dde0e4"/>
<g font-family="Liberation Sans" font-size="6.5" font-weight="bold">
 <text x="184.5" y="833.5" fill="#c8286e">8.85</text>
 <text x="184.5" y="840" fill="#c8286e">0·12</text>
 <text x="235" y="833.5" fill="#4a7ac0">0.5</text>
 <text x="234.5" y="840" fill="#4a7ac0">e-1</text>
 <text x="258.5" y="833.5" fill="#4a7ac0">050</text>
 <text x="258" y="840" fill="#4a7ac0">e-3</text>
 <text x="280.5" y="838" fill="#4a7ac0">0.85</text>
</g>
<rect x="207.5" y="826.5" width="18" height="17" rx="2.5" fill="#a8cdf0" stroke="#4a80c8" stroke-width="1.2"/>
<text x="209.2" y="838" font-family="Liberation Sans" font-size="6.5" fill="#3a6ab0" textLength="14.5" lengthAdjust="spacingAndGlyphs">AUTO</text>
<rect x="306" y="827" width="1" height="16" fill="#dde0e4"/>
<!-- brush -->
<path d="M323 828 L327.5 835" stroke="#6a6a6a" stroke-width="1.3"/>
<path d="M326 834.5 L329.5 832.5 L333 840.5 L330 842.5Z" fill="#d6a868"/>
<!-- trash -->
<rect x="349" y="827" width="7" height="2" rx="0.5" fill="#4a8ad0"/>
<path d="M347 829.5 L358 829.5 L356.5 842.5 L348.5 842.5Z" fill="#7ab0e4" stroke="#4a8ad0" stroke-width="0.8"/>
<!-- table -->
<rect x="370.5" y="828.5" width="12" height="12" fill="#f8e0ea" stroke="#c8286e" stroke-width="1"/>
<path d="M370.5 832.5 L382.5 832.5 M370.5 836.5 L382.5 836.5 M374.5 828.5 L374.5 840.5 M378.5 828.5 L378.5 840.5" stroke="#c8286e" stroke-width="0.8"/>
<path d="M369 827 L369 842 L384 842" stroke="#555" stroke-width="1" fill="none"/>
<rect x="393" y="827" width="15" height="14.5" fill="#b0246c"/>
<!-- copy -->
<rect x="416.5" y="827.5" width="10" height="8" fill="#e8e8e8" stroke="#666" stroke-width="1"/>
<rect x="421.5" y="831.5" width="10" height="11" fill="#d8e8f8" stroke="#4a80c0" stroke-width="1.2"/>
<path d="M423 837 L430 837 M426.5 834 L426.5 840" stroke="#4a80c0" stroke-width="0.8"/>
<!-- export -->
<rect x="440.5" y="828.5" width="13" height="13" fill="#f4f4f4" stroke="#666" stroke-width="1.1"/>
<rect x="440.5" y="828.5" width="13" height="2.5" fill="#777"/>
<path d="M445 836 L455 836" stroke="#3a80d0" stroke-width="1.6"/>
<path d="M453.5 833 L457 836 L453.5 839Z" fill="#3a80d0"/>
<!-- pink table -->
<rect x="464" y="827.5" width="14" height="14" fill="#d8588e"/>
<path d="M464 831 L478 831 M464 834.5 L478 834.5 M464 838 L478 838 M468.5 827.5 L468.5 841.5 M473 827.5 L473 841.5" stroke="#f8e4ec" stroke-width="0.9"/>
<path d="M487 833 L495 833 L491 837Z" fill="#222"/>
</svg>

<!-- TABLE -->
<div class="a" style="left:143px;top:851px;width:1058px;height:120px;background:#fff;border:1px solid #d0d0d0"></div>
<div class="a" style="left:144px;top:862px;width:1040px;height:14px;background:linear-gradient(#f6f6f6,#ededed)"></div>
<div class="a" style="left:144px;top:876px;width:1040px;height:1px;background:#bdbdbd"></div>
<div class="a" style="left:179px;top:852px;width:1px;height:110px;background:#c6c6c6"></div>
<div class="a" style="left:243px;top:852px;width:1px;height:110px;background:#c6c6c6"></div>
<div class="a" style="left:279px;top:852px;width:1px;height:110px;background:#c6c6c6"></div>
<div class="a" style="left:333px;top:852px;width:1px;height:24px;background:#dcdcdc"></div>
<div class="a" style="left:144px;top:895px;width:1040px;height:1px;background:#c8c8c8"></div>
<div class="a" style="left:144px;top:912px;width:1040px;height:1px;background:#c8c8c8"></div>
<div class="a" style="left:144px;top:930.5px;width:1040px;height:1px;background:#c8c8c8"></div>
<div class="a" style="left:144px;top:948.5px;width:1040px;height:1px;background:#c8c8c8"></div>
<div class="a" style="left:1184px;top:852px;width:16px;height:25px;background:#fff"></div>
<div class="a" style="left:1184px;top:877px;width:16px;height:90px;background:#e9e9e9;border-left:1px solid #dcdcdc"></div>
<svg style="left:1187px;top:883px" width="8" height="5"><path d="M0.5 4.5 L3.5 0.5 L6.5 4.5Z" fill="#777"/></svg>
<div class="a" style="left:1184px;top:939px;width:16px;height:30px;border:1px solid #8c8c8c;border-radius:2px;background:linear-gradient(90deg,#f0f0f0,#e0e0e0 60%,#d6d6d6)"></div>
<div class="a" style="left:1189px;top:954px;width:6px;height:1px;background:#666"></div>
<div class="a" style="left:1189px;top:957px;width:6px;height:1px;background:#666"></div>
<div class="a" style="left:1189px;top:960px;width:6px;height:1px;background:#666"></div>
<div class="t" style="left:144px;top:861.5px;font-size:12px;color:#111;transform:scaleX(0.92);transform-origin:0 0">x</div>
<div class="t" style="left:185px;top:861.5px;font-size:12px;color:#111;transform:scaleX(0.92);transform-origin:0 0">y</div>
<div class="t" style="left:249px;top:861.5px;font-size:12px;color:#111;transform:scaleX(0.92);transform-origin:0 0">z</div>
<div class="t" style="left:285px;top:861.5px;font-size:12px;color:#111;transform:scaleX(0.92);transform-origin:0 0">Value</div>
<div class="t" style="left:144.5px;top:881px;font-size:12px;color:#000;transform:scaleX(0.9);transform-origin:0 0">18.175</div>
<div class="t" style="left:180.5px;top:881px;font-size:12px;color:#000;transform:scaleX(0.9);transform-origin:0 0">7.1054E-15</div>
<div class="t" style="left:244.5px;top:881px;font-size:12px;color:#000;transform:scaleX(0.9);transform-origin:0 0">50.576</div>
<div class="t" style="left:280.5px;top:881px;font-size:12px;color:#000;transform:scaleX(0.9);transform-origin:0 0">0.0015359</div>
<div class="t" style="left:144.5px;top:899px;font-size:12px;color:#000;transform:scaleX(0.9);transform-origin:0 0">34.830</div>
<div class="t" style="left:180.5px;top:899px;font-size:12px;color:#000;transform:scaleX(0.9);transform-origin:0 0">1.4211E-14</div>
<div class="t" style="left:244.5px;top:899px;font-size:12px;color:#000;transform:scaleX(0.9);transform-origin:0 0">55.334</div>
<div class="t" style="left:280.5px;top:899px;font-size:12px;color:#000;transform:scaleX(0.9);transform-origin:0 0">3.8144E-5</div>
<div class="t" style="left:144.5px;top:917px;font-size:12px;color:#000;transform:scaleX(0.9);transform-origin:0 0">20.429</div>
<div class="t" style="left:180.5px;top:917px;font-size:12px;color:#000;transform:scaleX(0.9);transform-origin:0 0">0.0000</div>
<div class="t" style="left:244.5px;top:917px;font-size:12px;color:#000;transform:scaleX(0.9);transform-origin:0 0">52.705</div>
<div class="t" style="left:280.5px;top:917px;font-size:12px;color:#000;transform:scaleX(0.9);transform-origin:0 0">5.1723E-4</div>
<div class="t" style="left:144.5px;top:935px;font-size:12px;color:#000;transform:scaleX(0.9);transform-origin:0 0">18.551</div>
<div class="t" style="left:180.5px;top:935px;font-size:12px;color:#000;transform:scaleX(0.9);transform-origin:0 0">7.1054E-15</div>
<div class="t" style="left:244.5px;top:935px;font-size:12px;color:#000;transform:scaleX(0.9);transform-origin:0 0">50.639</div>
<div class="t" style="left:280.5px;top:935px;font-size:12px;color:#000;transform:scaleX(0.9);transform-origin:0 0">0.0011822</div>
<div class="t" style="left:144.5px;top:953px;font-size:12px;color:#000;transform:scaleX(0.9);transform-origin:0 0">14.606</div>
<div class="t" style="left:180.5px;top:953px;font-size:12px;color:#000;transform:scaleX(0.9);transform-origin:0 0">0.0000</div>
<div class="t" style="left:244.5px;top:953px;font-size:12px;color:#000;transform:scaleX(0.9);transform-origin:0 0">47.884</div>
<div class="t" style="left:280.5px;top:953px;font-size:12px;color:#000;transform:scaleX(0.9);transform-origin:0 0">0.010397</div>

</body></html>
